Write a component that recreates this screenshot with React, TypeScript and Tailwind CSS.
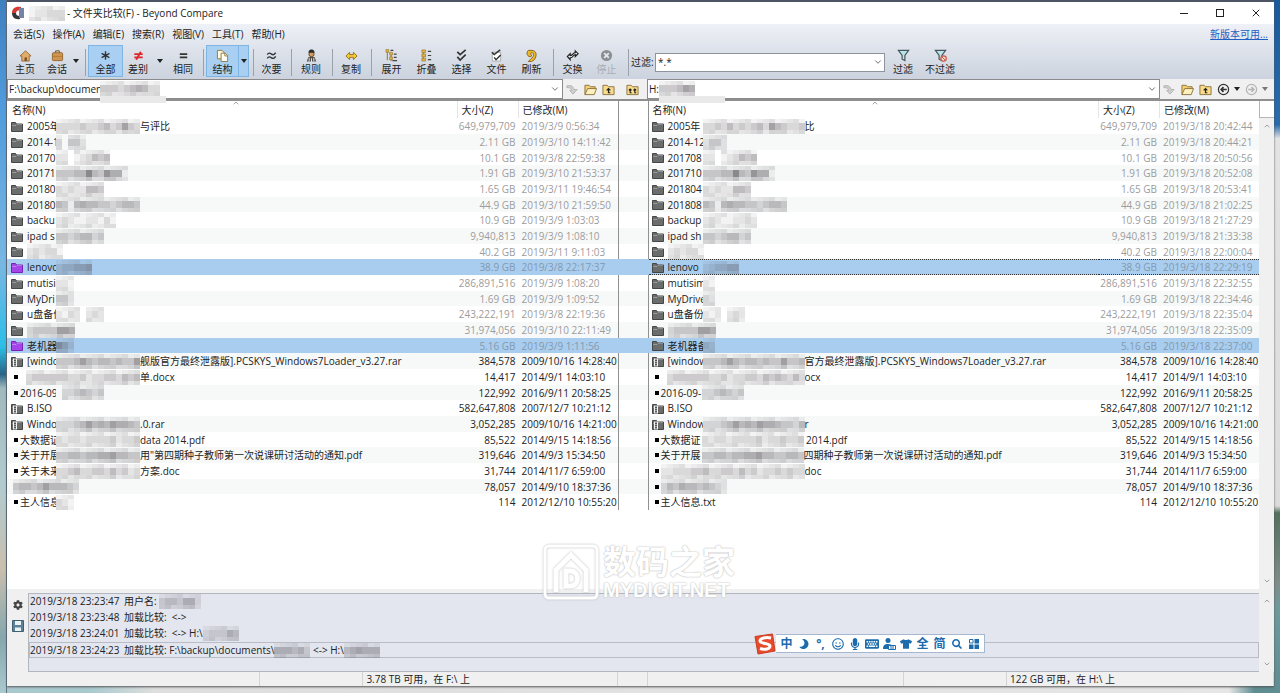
import React from "react";
import {
  FaMoon,
  FaMicrophone,
  FaKeyboard,
  FaTshirt,
  FaSearch,
  FaCog,
  FaRegSmile,
} from "react-icons/fa";
import { ChevronDown, ChevronUp, X } from "lucide-react";

type Kind = "folder" | "purple" | "archive" | "file" | "none";

interface Side {
  kind: Kind;
  name: string;
  mask?: string;
  tail?: string;
  size: string;
  date: string;
}

interface Row {
  left: Side;
  right: Side;
  selected?: boolean;
  focused?: boolean;
  dim?: boolean;
}

const side = (kind: Kind, name: string, mask: string, tail: string, size: string, date: string): Side => ({
  kind,
  name,
  mask,
  tail,
  size,
  date,
});

const rows: Row[] = [
  {
    dim: true,
    left: side("folder", "2005年", "33334334534743", "与评比", "649,979,709", "2019/3/9 0:56:34"),
    right: side("folder", "2005年", "33435343453754334", "比", "649,979,709", "2019/3/18 20:42:44"),
  },
  {
    dim: true,
    left: side("folder", "2014-1", "30442", "", "2.11 GB", "2019/3/10 14:11:42"),
    right: side("folder", "2014-12", "2442", "", "2.11 GB", "2019/3/18 20:44:21"),
  },
  {
    dim: true,
    left: side("folder", "20170", "220123545", "", "10.1 GB", "2019/3/8 22:59:38"),
    right: side("folder", "201708", "220123545", "", "10.1 GB", "2019/3/18 20:50:56"),
  },
  {
    dim: true,
    left: side("folder", "20171", "444559548661", "", "1.91 GB", "2019/3/10 21:53:37"),
    right: side("folder", "201710", "444559548661", "", "1.91 GB", "2019/3/18 20:52:08"),
  },
  {
    dim: true,
    left: side("folder", "20180", "32322554", "", "1.65 GB", "2019/3/11 19:46:54"),
    right: side("folder", "201804", "32322554", "", "1.65 GB", "2019/3/18 20:53:41"),
  },
  {
    dim: true,
    left: side("folder", "20180", "54156554434554", "", "44.9 GB", "2019/3/10 21:59:50"),
    right: side("folder", "201808", "54156554434554", "", "44.9 GB", "2019/3/18 21:02:25"),
  },
  {
    dim: true,
    left: side("folder", "backu", "2321122131", "", "10.9 GB", "2019/3/9 1:03:03"),
    right: side("folder", "backup", "232112232", "", "10.9 GB", "2019/3/18 21:27:29"),
  },
  {
    dim: true,
    left: side("folder", "ipad s", "44345534", "", "9,940,813", "2019/3/9 1:08:10"),
    right: side("folder", "ipad sh", "44345534", "", "9,940,813", "2019/3/18 21:33:38"),
  },
  {
    dim: true,
    left: side("folder", "", "232331", "", "40.2 GB", "2019/3/11 9:11:03"),
    right: side("folder", "", "232331", "", "40.2 GB", "2019/3/18 22:00:04"),
  },
  {
    dim: true,
    selected: true,
    focused: true,
    left: side("purple", "lenovo", "344556", "", "38.9 GB", "2019/3/8 22:17:37"),
    right: side("folder", "lenovo", "234455", "", "38.9 GB", "2019/3/18 22:29:19"),
  },
  {
    dim: true,
    left: side("folder", "mutisi", "221", "", "286,891,516", "2019/3/9 1:08:20"),
    right: side("folder", "mutisim", "21", "", "286,891,516", "2019/3/18 22:32:55"),
  },
  {
    dim: true,
    left: side("folder", "MyDri", "442", "", "1.69 GB", "2019/3/9 1:09:52"),
    right: side("folder", "MyDrive", "32", "", "1.69 GB", "2019/3/18 22:34:46"),
  },
  {
    dim: true,
    left: side("folder", "u盘备份", "21320232", "", "243,222,191", "2019/3/8 22:19:36"),
    right: side("folder", "u盘备份", "2120232", "", "243,222,191", "2019/3/18 22:35:04"),
  },
  {
    dim: true,
    left: side("folder", "", "34444776", "", "31,974,056", "2019/3/10 22:11:49"),
    right: side("folder", "", "34444776", "", "31,974,056", "2019/3/18 22:35:09"),
  },
  {
    dim: true,
    selected: true,
    left: side("purple", "老机器", "753", "", "5.16 GB", "2019/3/9 1:11:56"),
    right: side("folder", "老机器备", "43", "", "5.16 GB", "2019/3/18 22:37:00"),
  },
  {
    left: side("archive", "[windo", "44457545545447", "舰版官方最终泄露版].PCSKYS_Windows7Loader_v3.27.rar", "384,578", "2009/10/16 14:28:40"),
    right: side("archive", "[window", "44457545545447445", "官方最终泄露版].PCSKYS_Windows7Loader_v3.27.rar", "384,578", "2009/10/16 14:28:40"),
  },
  {
    left: side("file", "", "03444444334233443545", "单.docx", "14,417", "2014/9/1 14:03:10"),
    right: side("file", "", "034444443342334435454353", "ocx", "14,417", "2014/9/1 14:03:10"),
  },
  {
    left: side("file", "2016-09", "03345434", "", "122,992", "2016/9/11 20:58:25"),
    right: side("file", "2016-09-", "3345434", "", "122,992", "2016/9/11 20:58:25"),
  },
  {
    left: side("archive", "B.ISO", "", "", "582,647,808", "2007/12/7 10:21:12"),
    right: side("archive", "B.ISO", "", "", "582,647,808", "2007/12/7 10:21:12"),
  },
  {
    left: side("archive", "Windo", "33345756576654", ".0.rar", "3,052,285", "2009/10/16 14:21:00"),
    right: side("archive", "Window", "33345756576654435", "r", "3,052,285", "2009/10/16 14:21:00"),
  },
  {
    left: side("file", "大数据证", "32332333342334", "data 2014.pdf", "85,522", "2014/9/15 14:18:56"),
    right: side("file", "大数据证", "32332333342334334", " 2014.pdf", "85,522", "2014/9/15 14:18:56"),
  },
  {
    left: side("file", "关于开展", "44554556675544", "用\"第四期种子教师第一次说课研讨活动的通知.pdf", "319,646", "2014/9/3 15:34:50"),
    right: side("file", "关于开展", "44554556675544554", "四期种子教师第一次说课研讨活动的通知.pdf", "319,646", "2014/9/3 15:34:50"),
  },
  {
    left: side("file", "关于未来", "33453344353423", "方案.doc", "31,744", "2014/11/7 6:59:00"),
    right: side("file", "", "223334453344353423343433", "doc", "31,744", "2014/11/7 6:59:00"),
  },
  {
    left: side("none", "", "45545755543", "", "78,057", "2014/9/10 18:37:36"),
    right: side("file", "", "35465545432", "", "78,057", "2014/9/10 18:37:36"),
  },
  {
    left: side("file", "主人信息", "321", "", "114", "2012/12/10 10:55:20"),
    right: side("file", "主人信息.txt", "", "", "114", "2012/12/10 10:55:20"),
  },
];

const strips = ["h-1 w-1.5", "h-[7px] w-1.5", "h-1 w-1.5"];

function Mosaic({ cells }: { cells: string }) {
  return (
    <span className="relative flex shrink-0 flex-col bg-inherit" aria-hidden="true">
      {strips.map((strip, line) => (
        <span key={line} className="flex">
          {[...cells].map((c, i) => {
            const n = Number(c);
            const shade =
              line === 1 ? n * 0.075 : n === 0 ? 0 : 0.07 + ((i * 5 + line * 3) % 4) * 0.035 + (line === 2 ? n * 0.02 : 0);
            return <span key={i} className={strip} style={{ backgroundColor: `rgba(85,80,85,${shade.toFixed(2)})` }} />;
          })}
        </span>
      ))}
    </span>
  );
}

function RowIcon({ kind }: { kind: Kind }) {
  if (kind === "none") return <span className="w-0.5 shrink-0" />;
  if (kind === "file") return <span className="mr-0.5 ml-[3px] size-1 shrink-0 bg-black" />;
  const fill = kind === "purple" ? "#a544e8" : "#6b6d6d";
  const edge = kind === "purple" ? "#7822b8" : "#454747";
  return (
    <svg viewBox="0 0 12 11" className="mr-1 h-[11px] w-3 shrink-0">
      <path d="M.5 10.500V1.500h4l1 1.500h6v7.500z" fill={fill} stroke={edge} />
      <path d="M1 4.500h4l1-1h5" stroke="#fff" strokeOpacity=".3" fill="none" />
      {kind === "archive" && (
        <>
          <path d="M2 2.500h4v8H2z" fill="#f3f3f3" />
          <path d="M4 2.500v8M3 4.500h2M3 6.500h2M3 8.500h2" stroke="#555" />
        </>
      )}
    </svg>
  );
}

function NameCell({ item, right, short }: { item: Side; right?: boolean; short?: boolean }) {
  const file = item.kind === "file";
  const width = right ? (file ? "w-[41px]" : "w-[35px]") : file ? "w-9" : "w-[29px]";
  return (
    <div
      className={`flex items-center overflow-hidden bg-inherit whitespace-pre ${right ? "pl-[3px]" : "pl-1"} ${
        short ? "h-[13px]" : "h-[15px]"
      }`}
    >
      <RowIcon kind={item.kind} />
      {item.name && <span className={`shrink-0 ${item.mask ? width : ""}`}>{item.name}</span>}
      {item.mask && <Mosaic cells={item.mask} />}
      {item.tail && <span>{item.tail}</span>}
    </div>
  );
}

function Cells({ item, row, right }: { item: Side; row: Row; right?: boolean }) {
  const ringed = Boolean(right && row.focused);
  const ring = ringed ? "border-y border-dotted border-[#333]" : "";
  const tone = row.dim ? (row.selected ? "text-[#8499ad]" : "text-[#9c9c9c]") : "text-[#222]";
  return (
    <>
      <td className={`bg-inherit p-0 ${ring}`}>
        <NameCell item={item} right={right} short={ringed} />
      </td>
      <td className={`p-0 pr-[3px] text-right ${tone} ${ring}`}>{item.size}</td>
      <td className={`p-0 pl-[3px] whitespace-nowrap ${tone} ${ring}`}>{item.date}</td>
    </>
  );
}

function Compare() {
  const head = "border-r border-[#e5e5e5] p-0 text-left font-normal leading-4";
  return (
    <table className="w-full table-fixed border-separate border-spacing-0 leading-[14px]">
      <colgroup>
        <col />
        <col className="w-[61px]" />
        <col className="w-[99px]" />
        <col className="w-[31px]" />
        <col />
        <col className="w-[61px]" />
        <col className="w-[99px]" />
      </colgroup>
      <thead>
        <tr className="h-[17px]">
          <th className={`${head} pl-[5px]`}>名称(N)</th>
          <th className={`${head} pl-1`}>大小(Z)</th>
          <th className="p-0 pl-1 text-left leading-4 font-normal">已修改(M)</th>
          <th className="border-x border-[#909090] p-0" aria-label="状态" />
          <th className={`${head} pl-1`}>名称(N)</th>
          <th className={`${head} pl-1`}>大小(Z)</th>
          <th className="p-0 pl-1 text-left leading-4 font-normal">已修改(M)</th>
        </tr>
      </thead>
      <tbody>
        {rows.map((row, i) => (
          <tr
            key={i}
            className={`${i % 3 === 2 ? "h-[15px]" : "h-4"} ${
              row.selected ? "bg-[#a9cdef]" : i % 2 === 1 ? "bg-[#f7f9f9]" : "bg-white"
            }`}
          >
            <Cells item={row.left} row={row} />
            <td className={`border-x p-0 ${row.selected ? "border-transparent" : "border-[#909090]"}`} />
            <Cells item={row.right} row={row} right />
          </tr>
        ))}
      </tbody>
    </table>
  );
}

function ScrollBar() {
  return (
    <div className="flex w-[15px] flex-col items-center justify-between bg-[#f0f0f0] py-1 text-[#a0a0a0]">
      <ChevronUp className="size-2" strokeWidth={3} />
      <ChevronDown className="size-2" strokeWidth={3} />
    </div>
  );
}

const glyphs = {
  home: (
    <>
      <path d="M1 7.500 7 2l6 5.500h-2V13H3V7.500z" fill="#dfae6c" stroke="#9a6c38" />
      <path d="M6 9h2.500v4H6z" fill="#7a4d22" />
    </>
  ),
  bag: (
    <>
      <path d="M5 4V2h4v2" stroke="#704315" fill="none" />
      <rect x="1.500" y="4" width="11" height="8.500" rx="1" fill="#cf9550" stroke="#946530" />
      <path d="M2 8h10" stroke="#b57b3a" />
    </>
  ),
  star: <path d="M7 2.500v9M2.800 4.800l8.400 4.500M11.200 4.800 2.800 9.300" stroke="#333" strokeWidth="1.500" />,
  diff: <path d="M2.500 5.500h9M2.500 9h9M9.500 3l-5 8.500" stroke="#e0272d" strokeWidth="2" />,
  same: <path d="M3 5.500h8M3 9h8" stroke="#333" strokeWidth="1.800" />,
  docs: (
    <>
      <path d="M1.500 1.500h5l2 2v7h-7z" fill="#fff8df" stroke="#917a3c" />
      <path d="M5.500 4.500h4.500l2.500 2.500v6.500h-7z" fill="#fffef6" stroke="#917a3c" />
      <path d="M9.500 4.500V7.500h3" fill="none" stroke="#917a3c" />
    </>
  ),
  minor: (
    <path d="M2.500 6c1.500-2.500 3-1.500 4.500-.5S10 6.500 11.500 4M2.500 10c1.500-2.500 3-1.500 4.500-.5s3 1 4.500-1.500" stroke="#333" strokeWidth="1.500" fill="none" />
  ),
  rules: (
    <>
      <path d="M2 13.500 3.500 9 7 8l3.500 1 1.500 4.500z" fill="#4b4b4b" />
      <path d="M4.500 9.500v4M7 10v4M9.500 9.500v4" stroke="#eee" />
      <circle cx="7" cy="5.500" r="2.800" fill="#d39d68" stroke="#6b4524" />
      <path d="M3.500 4C4 1 6 .5 7 .5S10 1 10.500 4z" fill="#2d2d2d" />
    </>
  ),
  copy: <path d="m1 7.500 4-4V6h4V3.500l4 4-4 4V9H5v2.500z" fill="#f6c92d" stroke="#92712a" />,
  expand: (
    <>
      <path d="M2.500 3v9M6.500 5v8" stroke="#8c6b24" />
      <path d="M1 .5h3v3H1zM5 3.500h3v3H5zM5 8.500h3v3H5z" fill="#e2b548" stroke="#8c6b24" strokeWidth=".6" />
      <path d="M6 1.500h3M9.500 5.500h3M9.500 9h3M8 12.500h5" stroke="#444" strokeWidth="1.200" />
    </>
  ),
  collapse: (
    <>
      <path d="M3.500 1v11" stroke="#8c6b24" />
      <path d="M2 1h4v3H2zM2 5.500h4v3H2zM2 10h4v3H2z" fill="#e5b63e" stroke="#8c6b24" strokeWidth=".6" />
      <path d="M8.500 2.500H12M8.500 7H12M8.500 11.500H12" stroke="#444" strokeWidth="1.200" />
    </>
  ),
  check: <path d="m2.500 3 3 3L11.500 1M2.500 8.500l3 3.500 6-6" stroke="#333" strokeWidth="1.800" fill="none" />,
  files: (
    <>
      <path d="M2.500 3.500h9V13h-9z" fill="#fff" stroke="#aaa" />
      <path d="m2 3.500 2.500 2.500L11 1M4.500 9l2 2.500L11.500 6.500" stroke="#333" strokeWidth="1.600" fill="none" />
    </>
  ),
  refresh: (
    <path d="M3.500 1.500h4c5 0 6 6 2 10.500L7 13.500H3.500l3-3c3-2 4-6 1-6.500-2 0-2 2 0 3l-2 1.500c-4-1-4-5-2-7z" fill="#efb92d" stroke="#806121" />
  ),
  swap: (
    <path d="m1.500 8 3-3v2c3 .5 2.500-3 5.500-3V2l3 3-3 3V6C7.500 6 8 9.500 4.500 9.500v2z" fill="#eef2f8" stroke="#222" strokeWidth="1.300" />
  ),
  stop: (
    <>
      <circle cx="7" cy="7" r="6" fill="#8b8e93" />
      <path d="m4.500 4.500 5 5M9.500 4.500l-5 5" stroke="#e3e6eb" strokeWidth="2" />
    </>
  ),
  funnel: <path d="M1.500 1.500h11L8.500 7v5.500l-3-1.500V7z" fill="#b9e3e6" stroke="#47565e" strokeWidth="1.300" />,
  nofilter: (
    <>
      <path d="M1.500 1.500h11L8.500 7v5.500l-3-1.500V7z" fill="#b9e3e6" stroke="#47565e" strokeWidth="1.300" />
      <circle cx="10.300" cy="10.300" r="2.900" fill="#f4d9d2" stroke="#d0503c" strokeWidth="1.200" />
      <path d="m8.500 8.500 3.600 3.600" stroke="#d0503c" />
    </>
  ),
};

interface ToolProps {
  icon: keyof typeof glyphs;
  label: string;
  width: string;
  active?: boolean;
  disabled?: boolean;
}

function Tool({ icon, label, width, active, disabled }: ToolProps) {
  return (
    <button
      type="button"
      disabled={disabled}
      className={`flex h-8 shrink-0 flex-col items-center border pt-[3px] ${width} ${
        active ? "border-[#7fb5e3] bg-[#a9d0f2]" : "border-transparent"
      } ${disabled ? "text-[#a9aeb6]" : ""}`}
    >
      <svg viewBox="0 0 14 14" className="size-[13px] shrink-0" fill="none">
        {glyphs[icon]}
      </svg>
      <span className="leading-[14px] whitespace-nowrap">{label}</span>
    </button>
  );
}

function Caret({ light }: { light?: boolean }) {
  return (
    <svg viewBox="0 0 6 4" className="h-1 w-1.5">
      <path d="M0 0h6L3 4z" fill={light ? "#777" : "#222"} />
    </svg>
  );
}

function Drop({ label, width, active }: { label: string; width: string; active?: boolean }) {
  return (
    <button
      type="button"
      aria-label={label}
      className={`flex h-8 shrink-0 items-center justify-center ${width} ${
        active ? "border border-l-0 border-[#7fb5e3] bg-[#a9d0f2]" : ""
      }`}
    >
      <Caret />
    </button>
  );
}

const Sep = () => <span className="mr-0.5 ml-1 h-[27px] w-px shrink-0 self-center bg-[#9aa1ad]" />;

function Toolbar() {
  return (
    <div className="flex h-[34px] items-start">
      <Tool icon="home" label="主页" width="w-9" />
      <Tool icon="bag" label="会话" width="w-7" />
      <Drop label="会话菜单" width="w-2.5" />
      <Sep />
      <Tool icon="star" label="全部" width="w-[35px]" active />
      <Tool icon="diff" label="差别" width="w-[30px]" />
      <Drop label="差别菜单" width="w-3.5" />
      <Tool icon="same" label="相同" width="w-8" />
      <Sep />
      <Tool icon="docs" label="结构" width="w-[33px]" active />
      <Drop label="结构菜单" width="w-2.5" active />
      <Sep />
      <Tool icon="minor" label="次要" width="w-[31px]" />
      <Sep />
      <Tool icon="rules" label="规则" width="w-[34px]" />
      <Sep />
      <Tool icon="copy" label="复制" width="w-8" />
      <Sep />
      <Tool icon="expand" label="展开" width="w-[35px]" />
      <Tool icon="collapse" label="折叠" width="w-[35px]" />
      <Tool icon="check" label="选择" width="w-[35px]" />
      <Tool icon="files" label="文件" width="w-[35px]" />
      <Tool icon="refresh" label="刷新" width="w-[35px]" />
      <Sep />
      <Tool icon="swap" label="交换" width="w-[33px]" />
      <Tool icon="stop" label="停止" width="w-[35px]" disabled />
      <Sep />
      <label htmlFor="filter" className="w-6 shrink-0 self-center whitespace-nowrap">
        过滤:
      </label>
      <span className="relative w-[230px] self-center">
        <select id="filter" className="block h-[19px] w-full appearance-none border border-[#8e949e] bg-white pl-0.5">
          <option>*.*</option>
        </select>
        <ChevronDown className="pointer-events-none absolute top-1 right-0.5 size-2.5 text-[#555]" />
      </span>
      <Tool icon="funnel" label="过滤" width="w-9" />
      <Tool icon="nofilter" label="不过滤" width="w-[38px]" />
    </div>
  );
}

function PathIcon({ type, label }: { type: "down" | "open" | "up" | "upup" | "back" | "next"; label: string }) {
  const folder = <path d="M1 12.500v-10h4.500L7 4h6v8.500z" fill="#f8dc8c" stroke="#8c713a" />;
  return (
    <button type="button" aria-label={label} className="flex w-[18px] shrink-0 items-center justify-center">
      <svg viewBox="0 0 14 14" className="size-[13px]" fill="none">
        {type === "down" && <path d="M1 3c5-1 7 1 7.500 4H12l-4.500 5L4 8h2C6 5.500 4 5 1 5z" fill="#cfcfcf" stroke="#aaa" strokeWidth=".8" />}
        {type === "open" && (
          <>
            <path d="M1 12.500v-10h4.500L7 4h5v2" fill="#f4cf74" stroke="#8c713a" />
            <path d="m1 12.500 3-6.500h9.500l-2.500 6.500z" fill="#fdf0bd" stroke="#8c713a" />
          </>
        )}
        {type === "up" && (
          <>
            {folder}
            <path d="M9 10.500H7V6.500M5 8l2-2 2 2" stroke="#222" strokeWidth="1.300" />
          </>
        )}
        {type === "upup" && (
          <>
            {folder}
            <path d="M6 10.500H4.500V6.500M3 8l1.500-1.500L6 8M11 10.500H9.500V6.500M8 8l1.500-1.500L11 8" stroke="#222" strokeWidth="1.200" />
          </>
        )}
        {(type === "back" || type === "next") && (
          <g stroke={type === "back" ? "#333" : "#b5b5b5"} strokeWidth="1.300">
            <circle cx="7" cy="7" r="5.500" />
            {type === "back" ? (
              <path d="M10.500 7h-6M7 4.500 4.500 7 7 9.500" strokeWidth="1.800" />
            ) : (
              <path d="M3.500 7h6M7 4.500 9.500 7 7 9.500" strokeWidth="1.800" />
            )}
          </g>
        )}
      </svg>
    </button>
  );
}

interface PathBoxProps {
  value: string;
  label: string;
  basis: string;
  offset: string;
  cells: string;
}

function PathBox({ value, label, basis, offset, cells }: PathBoxProps) {
  return (
    <span className={`relative min-w-0 grow border border-[#8b8b8b] bg-white ${basis}`}>
      <select aria-label={label} className="h-[18px] w-full appearance-none bg-transparent pl-px outline-none">
        <option>{value}</option>
      </select>
      <ChevronDown className="pointer-events-none absolute top-1 right-0.5 size-2.5 text-[#555]" />
      <span className={`absolute top-0 flex h-[23px] w-[66px] flex-col items-start bg-white ${offset}`}>
        <span className="flex h-4 items-end">
          <Mosaic cells={cells} />
        </span>
        <span className="h-[7px] w-full bg-[#e9e9ea]" />
      </span>
    </span>
  );
}

const menus = ["会话(S)", "操作(A)", "编辑(E)", "搜索(R)", "视图(V)", "工具(T)", "帮助(H)"];

const Log = ({ time, children, current }: { time: string; children: React.ReactNode; current?: boolean }) => (
  <li
    className={`flex items-center border whitespace-pre ${
      current ? "h-4 border-[#b9bcc4]" : "h-[15px] border-transparent"
    }`}
  >
    <time className="w-[94px] shrink-0">{time}</time>
    {children}
  </li>
);

function ImeBar() {
  const item = "flex w-[17px] shrink-0 items-center justify-center";
  return (
    <div className="absolute bottom-8 left-[747px] flex h-[21px] items-center text-[#1c6cad]">
      <svg viewBox="0 0 22 22" className="size-[22px] shrink-0">
        <path d="M1 3.500 18.500 1 21 18 4 21z" fill="#e84a2b" stroke="#c93c20" />
        <path d="M17 5C12 4 6 5 6 8s10 2 10 5-5 4-10 2.500" stroke="#fff" strokeWidth="3" fill="none" />
      </svg>
      <div className="flex h-[19px] items-center border border-l-0 border-[#a5b8cf] bg-white px-0.5 text-xs font-bold">
        <span className={item}>中</span>
        <span className={item}><FaMoon className="size-2.5 -scale-x-100" /></span>
        <span className={item}>°,</span>
        <span className={item}><FaRegSmile className="size-3" /></span>
        <span className={item}><FaMicrophone className="size-3" /></span>
        <span className={item}><FaKeyboard className="size-3.5" /></span>
        <span className={item}>
          <svg viewBox="0 0 14 14" className="size-3.5">
            <circle cx="6" cy="3.500" r="2.500" fill="currentColor" />
            <path d="M1 12c0-4 2-5 5-5s4 1 4 2H6v3z" fill="currentColor" />
            <path d="M6.500 8.500h7v4h-7zM9 8.500v4M11 8.500v4" fill="#fff" stroke="currentColor" />
          </svg>
        </span>
        <span className={item}><FaTshirt className="size-3" /></span>
        <span className={item}>全</span>
        <span className={item}>简</span>
        <span className={item}><FaSearch className="size-2.5" /></span>
        <span className={item}>
          <svg viewBox="0 0 12 12" className="size-3">
            <path d="M1.500 1.500h3.500v3.500H1.500z" fill="none" stroke="currentColor" />
            <path d="M6.500 1H11v4.500H6.500zM1 6.500h4.500V11H1zM6.500 6.500H11V11H6.500z" fill="currentColor" />
          </svg>
        </span>
      </div>
    </div>
  );
}

function Watermark() {
  return (
    <div className="pointer-events-none absolute bottom-[86px] left-[536px] flex items-center gap-1 text-white">
      <svg viewBox="0 0 56 56" className="size-14 drop-shadow-[0_0_1px_#bbb]" fill="none" stroke="#fff">
        <rect x="2" y="2" width="52" height="52" rx="4" strokeWidth="3" />
        <path d="M13 48V26L28 11l15 15v22" strokeWidth="5" />
        <path d="M23 27h4c10 0 10 15 0 15h-4z" strokeWidth="5" />
      </svg>
      <div className="flex flex-col [text-shadow:0_0_2px_#bbb,0_0_1px_#ccc]">
        <span className="text-[33px] leading-9 font-bold">数码之家</span>
        <span className="font-['Liberation_Sans',sans-serif] text-xl leading-5 font-bold">MYDIGIT.NET</span>
      </div>
    </div>
  );
}

export default function App() {
  return (
    <div className="flex min-h-screen w-full bg-[linear-gradient(to_right,#a9c9cf_0,#a9c9cf_7%,#dedede_12%,#e6e6e6_96%,#5f8d92_98%)] font-['Open_Sans','Noto_Sans_CJK_SC',sans-serif] text-[10px] text-[#222]">
      <div className="w-[7px] shrink-0 border-r border-[#5f7180] bg-[linear-gradient(#3f7fc0_0,#4f9bdc_15%,#79b7e3_38%,#2bbfe8_50%,#286486_54%,#9fb9bd_56%,#b1cbcf_70%,#c9bfae_82%,#86a7ad_92%,#a9c9cf)]" />
      <main className="relative mt-0.5 mb-[7px] flex min-w-0 flex-1 flex-col bg-[#f0f0f0] shadow-[0_1px_2px_#555,0_-2px_0_#4d5664]">
        <header className="flex h-[22px] items-center bg-white pl-1">
          <svg viewBox="0 0 14 14" className="size-[14px]">
            <path d="M10 1C4 0 1 3 1 7h4c0-2 2-3 5-3z" fill="#d43932" />
            <path d="M1 7c0 4 3 7 8 6v-3C6 10 5 9 5 7z" fill="#35363a" />
            <path d="M8 2h5v10H8z" fill="#7683a7" />
          </svg>
          <span className="ml-1 flex w-[38px]">
            <Mosaic cells="122333" />
          </span>
          <h1 className="whitespace-nowrap">- 文件夹比较(F) - Beyond Compare</h1>
          <div className="ml-auto flex text-[#222]">
            <button type="button" aria-label="最小化" className="flex w-9 items-center justify-center">
              <span className="h-px w-2 bg-[#222]" />
            </button>
            <button type="button" aria-label="最大化" className="flex w-9 items-center justify-center">
              <span className="size-2 border border-[#222]" />
            </button>
            <button type="button" aria-label="关闭" className="flex w-9 items-center justify-center">
              <X className="size-3" strokeWidth={2} />
            </button>
          </div>
        </header>

        <div className="bg-linear-to-b from-[#eef1f6] to-[#ccd3de]">
          <nav className="flex h-[21px] items-center gap-2 px-1.5">
            {menus.map((m) => (
              <button key={m} type="button" className="whitespace-nowrap">
                {m}
              </button>
            ))}
            <a href="#update" className="ml-auto text-[#1f5fc4] underline">
              新版本可用...
            </a>
          </nav>
          <Toolbar />
        </div>

        <div className="flex h-[22px] border-b-2 border-[#8f8f8f] bg-[#f0f0f0]">
          <PathBox label="左侧路径" value="F:\backup\documen" basis="basis-[45px]" offset="left-[92px]" cells="4443456533" />
          <span className="flex w-[84px] shrink-0">
            <PathIcon type="down" label="左侧跳转" />
            <PathIcon type="open" label="打开左侧文件夹" />
            <PathIcon type="up" label="左侧上一级" />
            <span className="ml-1.5 flex">
              <PathIcon type="upup" label="两侧上一级" />
            </span>
          </span>
          <PathBox label="右侧路径" value="H:" basis="basis-0" offset="left-[11px]" cells="444576" />
          <span className="flex w-[114px] shrink-0 items-center">
            <PathIcon type="down" label="右侧跳转" />
            <PathIcon type="open" label="打开右侧文件夹" />
            <PathIcon type="up" label="右侧上一级" />
            <PathIcon type="back" label="后退" />
            <button type="button" aria-label="后退记录" className="px-0.5">
              <Caret />
            </button>
            <PathIcon type="next" label="前进" />
            <button type="button" aria-label="前进记录" className="px-0.5">
              <Caret light />
            </button>
          </span>
        </div>

        <section className="flex flex-1 bg-white">
          <div className="relative min-w-0 flex-1">
            <Compare />
            <ChevronUp className="absolute -top-0.5 left-[18%] size-2 text-[#777]" />
            <ChevronUp className="absolute -top-0.5 left-[69%] size-2 text-[#777]" />
          </div>
          <div className="flex flex-col">
            <span className="h-[17px] border-b border-l border-[#b5b5b5]" />
            <div className="flex flex-1">
              <ScrollBar />
            </div>
          </div>
        </section>

        <section className="mt-1 flex h-[79px]">
          <div className="flex w-[21px] flex-col items-center gap-2.5 pt-[7px] text-[#444]">
            <button type="button" aria-label="选项">
              <FaCog className="size-2.5" />
            </button>
            <button type="button" aria-label="保存日志">
              <svg viewBox="0 0 12 12" className="size-3">
                <path d="M.5.500h11v11H.5z" fill="#5d8298" stroke="#40606f" />
                <path d="M3 1h6v4H3zM3 7.500h6V11H3z" fill="#e9f2f5" />
              </svg>
            </button>
          </div>
          <ul className="flex min-w-0 flex-1 flex-col gap-px border border-r-0 border-[#b2b6bf] bg-[#e3e6ef]">
            <Log time="2019/3/18 23:23:47">
              用户名: <Mosaic cells="3443552" />
            </Log>
            <Log time="2019/3/18 23:23:48">加载比较:  &lt;-&gt;</Log>
            <Log time="2019/3/18 23:24:01">
              加载比较:  &lt;-&gt; H:\<Mosaic cells="233354" />
            </Log>
            <Log time="2019/3/18 23:24:23" current>
              加载比较: F:\backup\documents\<Mosaic cells="555453" /> &lt;-&gt; H:\<Mosaic cells="456555" />
            </Log>
          </ul>
          <div className="flex">
            <ScrollBar />
          </div>
        </section>

        <footer className="flex h-[14px] items-center bg-[#f0f0f0] *:h-full *:border-r *:border-[#d4d4d4] *:leading-[14px]">
          <span className="w-[20%]" />
          <span className="w-[103px]" />
          <span className="w-[255px] pl-[3px]">3.78 TB 可用，在 F:\ 上</span>
          <span className="w-[30px]" />
          <span className="flex-1" />
          <span className="w-[103px]" />
          <span className="w-[267px] pl-[3px]">122 GB 可用，在 H:\ 上</span>
        </footer>

        <Watermark />
        <ImeBar />
      </main>
      <div className="w-1.5 shrink-0 bg-[linear-gradient(#1a5a9c_0,#2a6cab_18%,#e3e3e3_20%,#dcdcdc_73%,#53705f_74%,#7f8c89_84%,#6e9a9c_88%,#5f8d92)]" />
    </div>
  );
}
